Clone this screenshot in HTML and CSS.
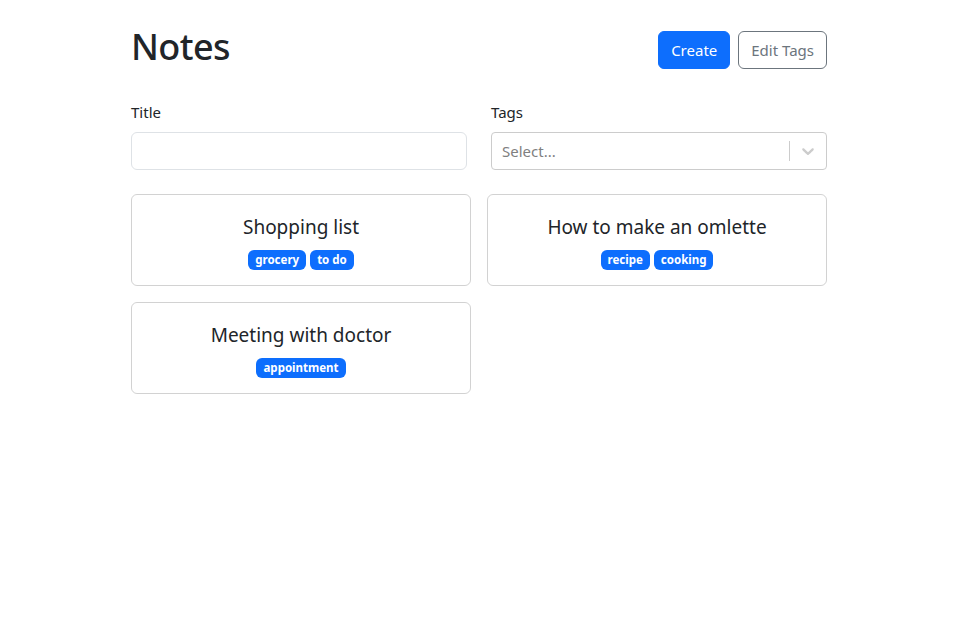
FILE: index.html
```html
<!DOCTYPE html>
<html lang="en">
<head>
<meta charset="utf-8">
<title>Notes</title>
<link rel="stylesheet" href="styles.css">
</head>
<body>
<div class="container">
  <div class="header">
    <h1 class="title">Notes</h1>
    <div class="actions">
      <button class="btn btn-primary">Create</button>
      <button class="btn btn-outline">Edit Tags</button>
    </div>
  </div>
  <form class="filters">
    <div class="field">
      <label class="label" for="title">Title</label>
      <input class="input" id="title" type="text">
    </div>
    <div class="field">
      <label class="label">Tags</label>
      <div class="select">
        <div class="select-value">Select...</div>
        <div class="select-indicators">
          <span class="select-sep"></span>
          <span class="select-arrow">
            <svg width="20" height="20" viewBox="0 0 20 20" aria-hidden="true"><path fill="currentColor" d="M4.516 7.548c0.436-0.446 1.043-0.481 1.576 0l3.908 3.747 3.908-3.747c0.533-0.481 1.141-0.446 1.574 0 0.436 0.445 0.408 1.197 0 1.615-0.406 0.418-4.695 4.502-4.695 4.502-0.217 0.223-0.502 0.335-0.787 0.335s-0.57-0.112-0.789-0.335c0 0-4.287-4.084-4.695-4.502s-0.436-1.170 0-1.615z"/></svg>
          </span>
        </div>
      </div>
    </div>
  </form>
  <div class="notes">
    <div class="card">
      <div class="card-title">Shopping list</div>
      <div class="badges"><span class="badge">grocery</span><span class="badge">to do</span></div>
    </div>
    <div class="card">
      <div class="card-title">How to make an omlette</div>
      <div class="badges"><span class="badge">recipe</span><span class="badge">cooking</span></div>
    </div>
    <div class="card">
      <div class="card-title">Meeting with doctor</div>
      <div class="badges"><span class="badge">appointment</span></div>
    </div>
  </div>
</div>
</body>
</html>
```

FILE: styles.css
```css
* { box-sizing: border-box; }
body {
  margin: 0;
  font-family: "Noto Sans", "Open Sans", sans-serif;
  font-size: 16px;
  line-height: 1.5;
  color: #212529;
  background: #fff;
}
.container {
  width: 720px;
  margin: 0 auto;
  padding: 24px 12px;
}
.header {
  display: flex;
  align-items: center;
  justify-content: space-between;
  margin-bottom: 24px;
}
.title {
  margin: 0 0 6px;
  font-size: 36px;
  font-weight: 500;
  letter-spacing: -0.6px;
  line-height: 46px;
}
.actions { display: flex; gap: 8px; }
.btn {
  font: inherit;
  font-size: 15px;
  line-height: 24px;
  padding: 6px 12px;
  border-radius: 6px;
  border: 1px solid transparent;
  background: none;
  cursor: pointer;
}
.btn-primary { background: #0d6efd; border-color: #0d6efd; color: #fff; }
.btn-outline { border-color: #6c757d; color: #6c757d; }
.filters {
  display: grid;
  grid-template-columns: 1fr 1fr;
  gap: 24px;
  margin: 0 0 24px;
}
.field { display: flex; flex-direction: column; }
.label { margin-bottom: 8px; font-size: 15px; line-height: 24px; }
.input {
  height: 38px;
  border: 1px solid #dee2e6;
  border-radius: 6px;
  padding: 6px 12px;
  font: inherit;
}
.select {
  height: 38px;
  border: 1px solid #ccc;
  border-radius: 4px;
  display: flex;
  align-items: center;
}
.select-value {
  flex: 1;
  padding: 2px 10px;
  color: #808080;
  font-size: 15px;
}
.select-indicators { display: flex; align-items: center; align-self: stretch; }
.select-sep { width: 1px; align-self: stretch; margin: 8px 0; background: #ccc; }
.select-arrow { display: flex; padding: 8px; color: #ccc; }
.notes {
  display: grid;
  grid-template-columns: 1fr 1fr;
  gap: 16px;
}
.card {
  border: 1px solid rgba(0,0,0,0.175);
  border-radius: 6px;
  padding: 17px 16px 15px;
  height: 92px;
  display: flex;
  flex-direction: column;
  align-items: center;
  justify-content: center;
  gap: 8px;
}
.card-title { font-size: 19px; line-height: 30px; }
.badges { display: flex; gap: 4px; }
.badge {
  background: #0d6efd;
  color: #fff;
  font-size: 11.5px;
  font-weight: 700;
  line-height: 1;
  padding: 4px 7px;
  border-radius: 6px;
  height: 20px;
  display: flex;
  align-items: center;
}
```
